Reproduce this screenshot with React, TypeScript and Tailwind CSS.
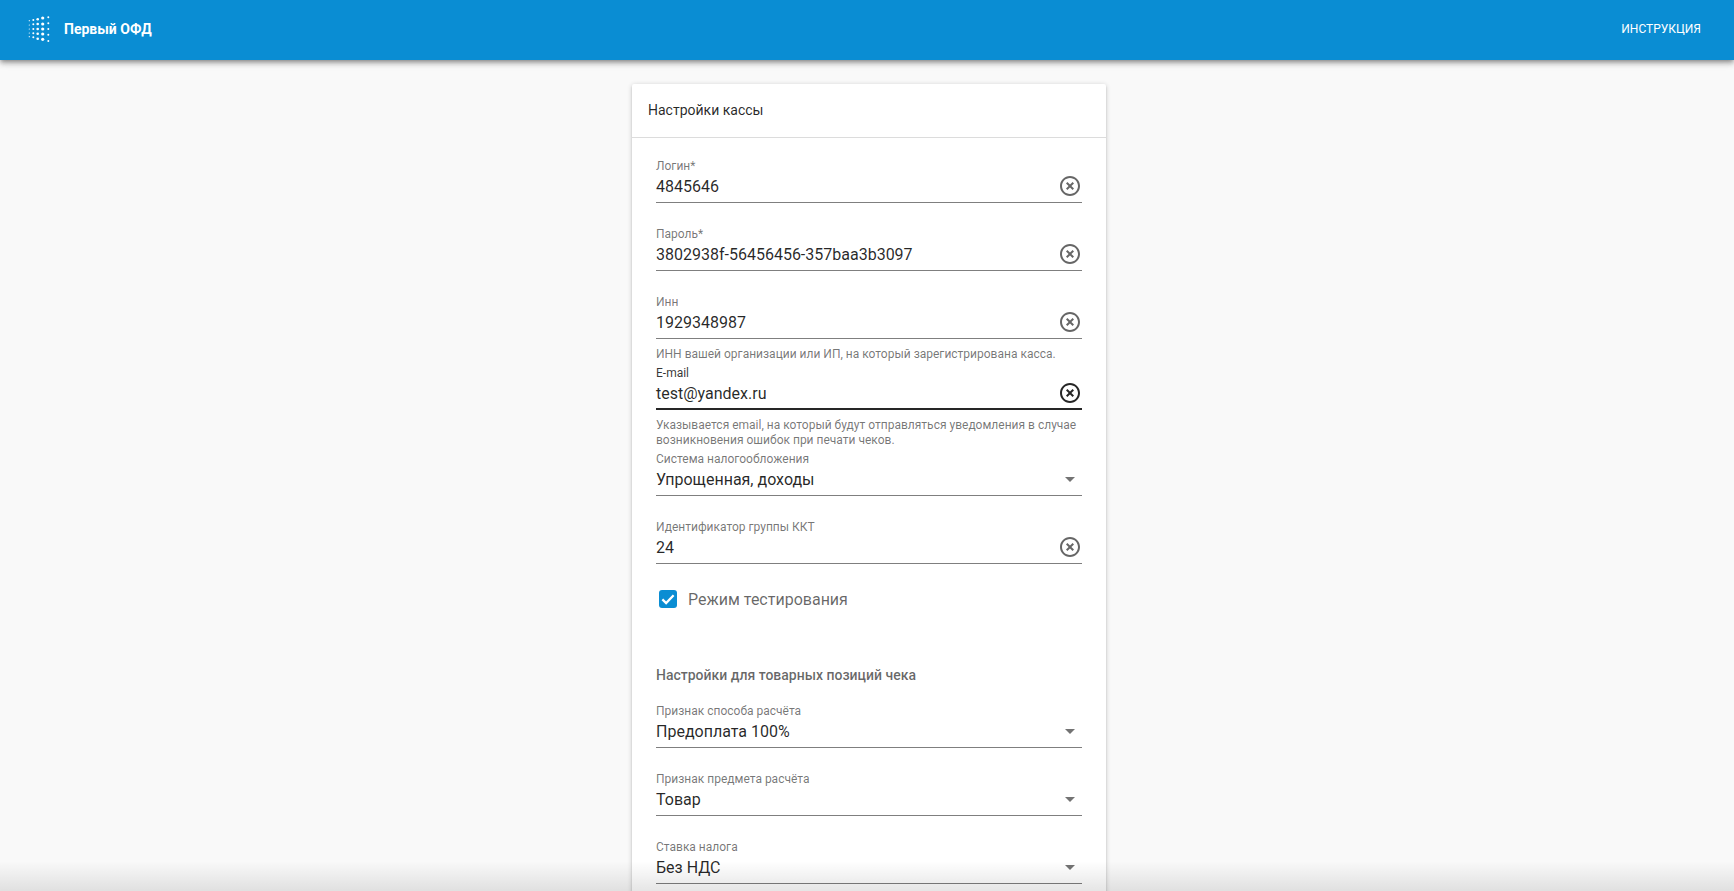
import React from "react";

function ClearIcon({ dark }: { dark?: boolean }) {
  return (
    <svg viewBox="0 0 24 24" className={`-mt-[2px] h-6 w-6 shrink-0 ${dark ? "fill-black/85" : "fill-black/60"}`}>
      <path d="M14.59 8L12 10.59 9.41 8 8 9.41 10.59 12 8 14.59 9.41 16 12 13.41 14.59 16 16 14.59 13.41 12 16 9.41 14.59 8zM12 2C6.47 2 2 6.47 2 12s4.47 10 10 10 10-4.47 10-10S17.53 2 12 2zm0 18c-4.41 0-8-3.59-8-8s3.59-8 8-8 8 3.59 8 8-3.59 8-8 8z" />
    </svg>
  );
}

function ArrowIcon() {
  return (
    <svg viewBox="0 0 24 24" className="-mt-[2px] h-6 w-6 shrink-0 fill-black/55">
      <path d="M7 10l5 5 5-5z" />
    </svg>
  );
}

const logoCols = [
  { x: 29.3, r: 0.6, ys: [20.7, 25, 29, 33, 36.7] },
  { x: 33.3, r: 1, ys: [20, 24.3, 29, 33.3, 37.3] },
  { x: 37.7, r: 1.3, ys: [19.3, 24, 29, 33.7, 38.7] },
  { x: 42.7, r: 1.6, ys: [18, 24, 29, 34, 39.3] },
  { x: 48.3, r: 1, ys: [17.3, 23.3, 29, 34.7, 41] },
];

function Logo() {
  return (
    <svg width="24" height="30" viewBox="27 15 24 30" className="shrink-0 fill-white">
      {logoCols.map((col) =>
        col.ys.map((y) => <circle key={`${col.x}-${y}`} cx={col.x} cy={y} r={col.r} />)
      )}
    </svg>
  );
}

type FieldProps = {
  label: string;
  value: string;
  select?: boolean;
  focused?: boolean;
  helper?: string[];
};

function Field({ label, value, select, focused, helper }: FieldProps) {
  return (
    <div className={helper ? "mb-1" : "mb-6"}>
      <div className={`h-[15px] text-xs leading-[15px] ${focused ? "text-black/80" : "text-black/55"}`}>{label}</div>
      <div
        className={`flex h-[29px] items-center justify-between pb-[2px] ${
          focused ? "border-b-2 border-black/85" : "border-b border-black/50"
        }`}
      >
        <span className="text-base text-black/85">{value}</span>
        {select ? <ArrowIcon /> : <ClearIcon dark={focused} />}
      </div>
      {helper && (
        <div className="mt-2 text-xs leading-[15px] text-black/55">
          {helper.map((line) => (
            <div key={line}>{line}</div>
          ))}
        </div>
      )}
    </div>
  );
}

export default function App() {
  return (
    <div className="relative h-screen overflow-hidden bg-[#f9f9f9] font-['Roboto',sans-serif]">
      <header className="relative z-10 flex h-[60px] items-center justify-between bg-[#0a8dd3] pl-[27px] pr-[33px] shadow-[0_2px_4px_-1px_rgba(0,0,0,0.3),0_4px_5px_0_rgba(0,0,0,0.18),0_1px_10px_0_rgba(0,0,0,0.12)]">
        <div className="flex items-center gap-[13px]">
          <Logo />
          <span className="pb-[2px] text-sm font-bold text-white">Первый ОФД</span>
        </div>
        <span className="pb-[2px] text-xs text-white">ИНСТРУКЦИЯ</span>
      </header>

      <main className="flex justify-center pl-1 pt-6">
        <div className="w-[474px] rounded-[2px] bg-white shadow-[0_1px_5px_0_rgba(0,0,0,0.2),0_2px_2px_0_rgba(0,0,0,0.14),0_3px_1px_-2px_rgba(0,0,0,0.12)]">
          <div className="flex h-[54px] items-center border-b border-[#dcdcdc] px-4 pb-[2px] text-sm text-black/85">
            Настройки кассы
          </div>
          <div className="px-6 pt-[21px]">
            <Field label="Логин*" value="4845646" />
            <Field label="Пароль*" value="3802938f-56456456-357baa3b3097" />
            <Field
              label="Инн"
              value="1929348987"
              helper={["ИНН вашей организации или ИП, на который зарегистрирована касса."]}
            />
            <Field
              label="E-mail"
              value="test@yandex.ru"
              focused
              helper={[
                "Указывается email, на который будут отправляться уведомления в случае",
                "возникновения ошибок при печати чеков.",
              ]}
            />
            <Field label="Система налогообложения" value="Упрощенная, доходы" select />
            <Field label="Идентификатор группы ККТ" value="24" />

            <label className="flex h-[22px] items-center pl-[3px]">
              <span className="flex h-[18px] w-[18px] items-center justify-center rounded-[3px] bg-[#0a8dd3]">
                <svg viewBox="0 0 24 24" className="h-[18px] w-[18px] fill-none stroke-white stroke-[3]">
                  <path d="M4.5 12.5l5 5L19.5 7" />
                </svg>
              </span>
              <span className="ml-[11px] pt-[2px] text-base text-black/60">Режим тестирования</span>
            </label>

            <div className="mb-[19px] mt-[55px] text-sm font-medium text-black/60">Настройки для товарных позиций чека</div>

            <Field label="Признак способа расчёта" value="Предоплата 100%" select />
            <Field label="Признак предмета расчёта" value="Товар" select />
            <Field label="Ставка налога" value="Без НДС" select />
          </div>
        </div>
      </main>

      <div className="pointer-events-none absolute inset-x-0 bottom-0 h-[30px] bg-gradient-to-b from-transparent to-black/10" />
    </div>
  );
}
